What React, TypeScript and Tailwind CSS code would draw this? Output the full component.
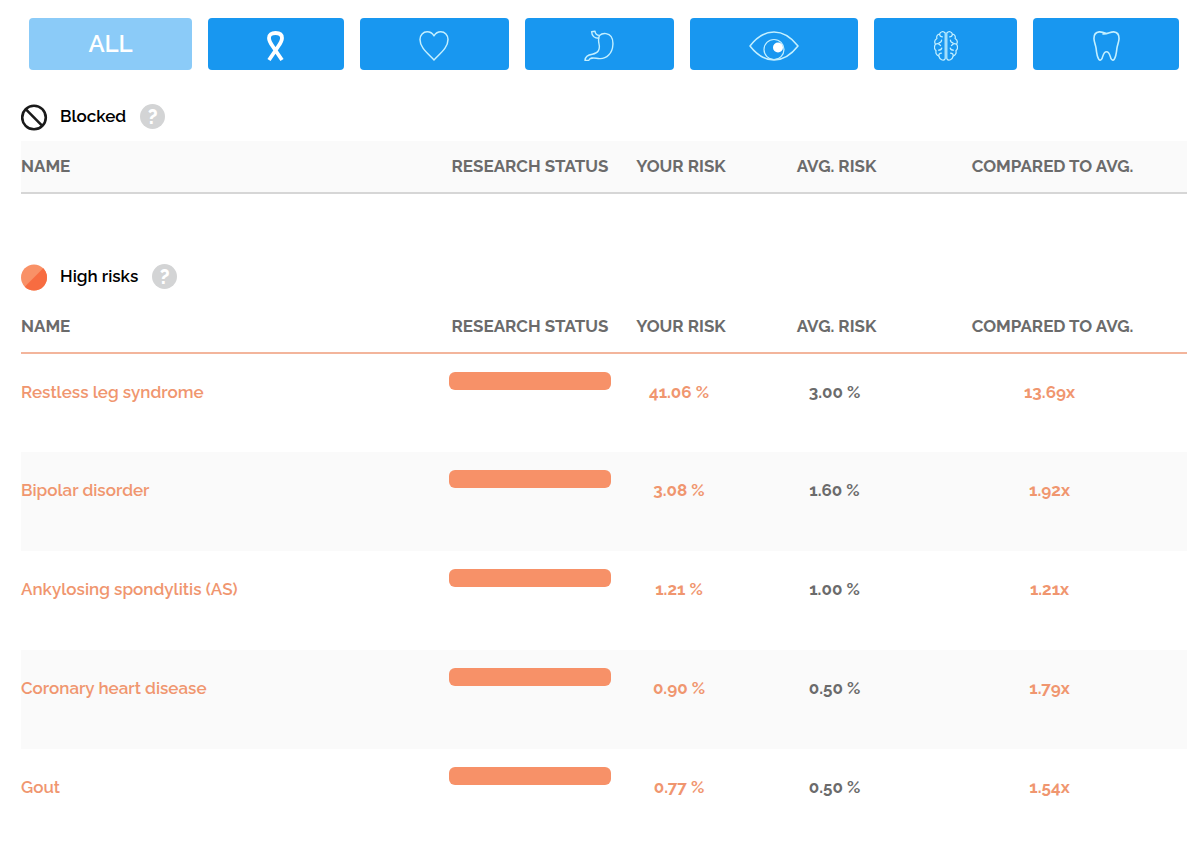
import { useState, type ReactNode } from 'react'

type Risk = { name: string; yours: string; avg: string; compared: string }

const HIGH_RISKS: Risk[] = [
  { name: 'Restless leg syndrome', yours: '41.06 %', avg: '3.00 %', compared: '13.69x' },
  { name: 'Bipolar disorder', yours: '3.08 %', avg: '1.60 %', compared: '1.92x' },
  { name: 'Ankylosing spondylitis (AS)', yours: '1.21 %', avg: '1.00 %', compared: '1.21x' },
  { name: 'Coronary heart disease', yours: '0.90 %', avg: '0.50 %', compared: '1.79x' },
  { name: 'Gout', yours: '0.77 %', avg: '0.50 %', compared: '1.54x' },
]

const line = { fill: 'none', stroke: 'currentColor', strokeLinecap: 'round', strokeLinejoin: 'round' } as const

const FILTERS: { id: string; label: string; content: ReactNode }[] = [
  { id: 'all', label: 'All', content: <span className="text-2xl font-semibold text-white">ALL</span> },
  {
    id: 'cancer',
    label: 'Cancer',
    content: (
      <svg width="17" height="32" viewBox="0 0 17 32" {...line} stroke="white" strokeWidth="3.8" strokeLinecap="butt">
        <path d="M2 30 L11.5 16 C14 12.5 15 10.5 15 8 C15 4.6 12.6 3 8.5 3 C4.4 3 2 4.6 2 8 C2 10.5 3 12.5 5.5 16 L15 30" />
      </svg>
    ),
  },
  {
    id: 'heart',
    label: 'Heart',
    content: (
      <svg width="30" height="32" viewBox="0 0 30 32" {...line} strokeWidth="1.5">
        <path d="M15 5.8 C13.2 2.9 10.9 1.8 8.2 1.8 C4.2 1.8 1 5 1 9.4 C1 17.8 8.5 23 15 30 C21.5 23 29 17.8 29 9.4 C29 5 25.8 1.8 21.8 1.8 C19.1 1.8 16.8 2.9 15 5.8 Z" />
      </svg>
    ),
  },
  {
    id: 'stomach',
    label: 'Stomach',
    content: (
      <svg width="30" height="32" viewBox="0 0 30 32" {...line} strokeWidth="1.4">
        <path d="M7.6 1.8 L11 1.2 C11.3 4 12.5 5.2 15.5 5.4 C17.5 3.6 19.6 3.2 22 3.6 C27 4.4 29.2 8.6 28.9 14.5 C28.5 23.5 22.5 29 15.5 28.6 C10.5 28.3 6.3 26.6 4.7 30.4 L1 30.4 C1.2 26.5 4 24.7 8.3 24.2 C14.6 23.4 16.2 19 15 13.8 C14.4 11 14.3 8 15.5 5.4 M15 8.3 C10.5 8.3 7.9 6.2 7.6 1.8" />
      </svg>
    ),
  },
  {
    id: 'eye',
    label: 'Eye',
    content: (
      <svg width="50" height="32" viewBox="0 0 50 32" {...line} strokeWidth="1.5">
        <path d="M1 16 C8 7 16 2 25 2 C34 2 42 7 49 16 C42 25 34 30 25 30 C16 30 8 25 1 16 Z" />
        <circle cx="25" cy="19.5" r="10" strokeWidth="1.2" />
        <circle cx="29" cy="17.5" r="5" fill="white" stroke="none" />
      </svg>
    ),
  },
  {
    id: 'brain',
    label: 'Brain',
    content: (
      <svg width="24" height="32" viewBox="0 0 24 32" {...line} strokeWidth="1.2">
        <path d="M11.2 3 C9.4 .8 6.2 1.4 5.6 4.2 C3.4 4.2 2.2 6.2 2.9 8.4 C.8 9.7 .2 12 1.4 14.2 C.1 16.6 .4 19.3 2.1 20.7 C1.4 23.2 2.6 25.5 4.8 26 C5.6 29.5 9.4 31.7 11.2 28.6 Z" />
        <path d="M12.8 3 C14.6 .8 17.8 1.4 18.4 4.2 C20.6 4.2 21.8 6.2 21.1 8.4 C23.2 9.7 23.8 12 22.6 14.2 C23.9 16.6 23.6 19.3 21.9 20.7 C22.6 23.2 21.4 25.5 19.2 26 C18.4 29.5 14.6 31.7 12.8 28.6 Z" />
        <path d="M5.6 4.4 C5.8 6 6.8 6.8 8.4 6.8 M7.6 10 C7.6 11.6 6.8 12.6 5 12.8 M1.6 14.2 C3.4 13.2 5.4 14 6.6 15.6 M7.8 18 C7.4 19.6 6.4 20.2 4.6 20.2 M4.8 26 C4.6 24.4 5.6 23.2 7.4 23.2" />
        <path d="M18.4 4.4 C18.2 6 17.2 6.8 15.6 6.8 M16.4 10 C16.4 11.6 17.2 12.6 19 12.8 M22.4 14.2 C20.6 13.2 18.6 14 17.4 15.6 M16.2 18 C16.6 19.6 17.6 20.2 19.4 20.2 M19.2 26 C19.4 24.4 18.4 23.2 16.6 23.2" />
      </svg>
    ),
  },
  {
    id: 'tooth',
    label: 'Tooth',
    content: (
      <svg width="27" height="32" viewBox="0 0 27 32" {...line} strokeWidth="1.6">
        <path d="M13.5 3.6 C10.5 2.4 8.5 1.6 6.2 1.9 C2.5 2.3 .8 5.2 1 9 C1.2 12.5 2.7 14.8 3.1 18.4 C3.5 22.5 4.2 27.2 5.9 29.4 C6.8 30.6 8.4 30.3 9 28.6 C10.3 25.2 10.5 21.8 13.5 21.8 C16.5 21.8 16.7 25.2 18 28.6 C18.6 30.3 20.2 30.6 21.1 29.4 C22.8 27.2 23.5 22.5 23.9 18.4 C24.3 14.8 25.8 12.5 26 9 C26.2 5.2 24.5 2.3 20.8 1.9 C17.5 1.6 14.5 4.6 10 4" />
      </svg>
    ),
  },
]

function BlockedIcon() {
  return (
    <svg width="27" height="27" viewBox="0 0 27 27" fill="none" stroke="#1a1a1a" strokeWidth="2.6" className="shrink-0">
      <circle cx="13" cy="13.5" r="11.8" />
      <path d="M4.7 5.2 L21.3 21.8" />
    </svg>
  )
}

function HighIcon() {
  return (
    <svg width="27" height="27" viewBox="0 0 27 27" className="shrink-0">
      <circle cx="13" cy="13.5" r="13" fill="#f99167" />
      <path d="M22.2 4.3 A13 13 0 0 1 3.8 22.7 Z" fill="#f76c41" />
    </svg>
  )
}

function RiskSection({ title, icon, lineColor, headColor, rows }: {
  title: string
  icon: ReactNode
  lineColor: string
  headColor: string
  rows: Risk[]
}) {
  return (
    <section>
      <div className="mb-[9px] flex h-7 items-start">
        {icon}
        <h2 className="ml-3 text-[17px] leading-6 font-semibold text-black">{title}</h2>
        <button
          type="button"
          aria-label={`About ${title}`}
          className="ml-3.5 flex size-[25px] items-center justify-center rounded-full bg-[#d3d4d5] text-xl leading-none font-extrabold text-white"
        >
          ?
        </button>
      </div>
      <table className="w-full table-fixed border-collapse font-bold">
        <thead>
          <tr className={`h-[52px] border-b-2 text-[17px] text-[#6b6b6b] ${lineColor} ${headColor}`}>
            <th className="text-left">NAME</th>
            <th className="w-[178px]">RESEARCH STATUS</th>
            <th className="w-[120px] pl-1">YOUR RISK</th>
            <th className="w-[191px] pl-1">AVG. RISK</th>
            <th className="w-[257px] pr-4 pl-1">COMPARED TO AVG.</th>
          </tr>
        </thead>
        <tbody>
          {rows.map(r => (
            <tr key={r.name} className="h-[99px] align-top text-[17px] leading-6 text-[#f0966f] even:bg-[#fafafa]">
              <td className="pt-[26px] font-semibold"><a href="#">{r.name}</a></td>
              <td className="px-2 pt-[18px]"><div className="h-[18px] rounded-md bg-[#f79168]" /></td>
              <td className="pt-[26px] text-center">{r.yours}</td>
              <td className="pt-[26px] text-center text-[#6b6b6b]">{r.avg}</td>
              <td className="pt-[26px] pr-[18px] text-center">{r.compared}</td>
            </tr>
          ))}
        </tbody>
      </table>
    </section>
  )
}

export default function App() {
  const [filter, setFilter] = useState('all')

  return (
    <main className="min-h-screen bg-white pt-[18px] pr-[13px] pl-[21px] font-['Raleway','Lato',sans-serif]">
      <nav className="mb-[34px] flex gap-4 px-2">
        {FILTERS.map(f => (
          <button
            key={f.id}
            type="button"
            aria-label={f.label}
            onClick={() => setFilter(f.id)}
            className={`flex h-[52px] grow items-center justify-center rounded text-[#c4f0ff] [&>svg]:mt-[3px] ${filter === f.id ? 'bg-[#8bcbf8]' : 'bg-[#1897f0]'}`}
          >
            {f.content}
          </button>
        ))}
      </nav>

      <div className="space-y-[70px]">
        <RiskSection title="Blocked" icon={<BlockedIcon />} lineColor="border-[#d6d6d6]" headColor="bg-[#fafafa]" rows={[]} />
        <RiskSection title="High risks" icon={<HighIcon />} lineColor="border-[#f3b59c]" headColor="bg-white" rows={HIGH_RISKS} />
      </div>
    </main>
  )
}
